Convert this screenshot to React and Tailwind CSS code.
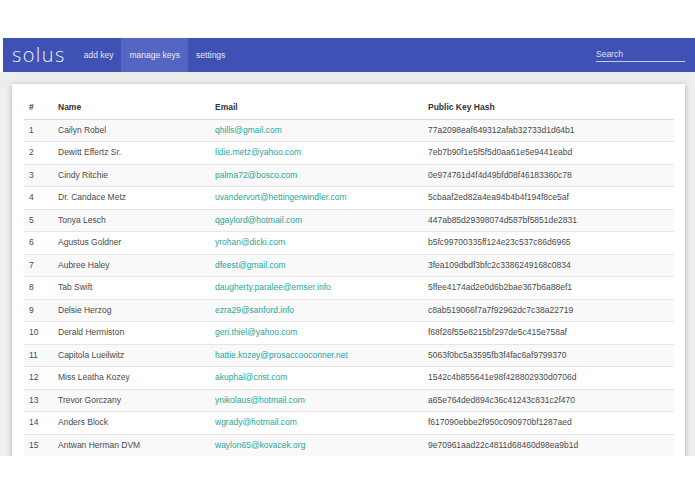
import React from 'react'

const rows = [
  ['1', 'Cailyn Robel', 'qhills@gmail.com', '77a2098eaf649312afab32733d1d64b1'],
  ['2', 'Dewitt Effertz Sr.', 'lidie.metz@yahoo.com', '7eb7b90f1e5f5f5d0aa61e5e9441eabd'],
  ['3', 'Cindy Ritchie', 'palma72@bosco.com', '0e974761d4f4d49bfd08f46183360c78'],
  ['4', 'Dr. Candace Metz', 'uvandervort@hettingerwindler.com', '5cbaaf2ed82a4ea94b4b4f194f8ce5af'],
  ['5', 'Tonya Lesch', 'qgaylord@hotmail.com', '447ab85d29398074d587bf5851de2831'],
  ['6', 'Agustus Goldner', 'yrohan@dicki.com', 'b5fc99700335ff124e23c537c86d6965'],
  ['7', 'Aubree Haley', 'dfeest@gmail.com', '3fea109dbdf3bfc2c3386249168c0834'],
  ['8', 'Tab Swift', 'daugherty.paralee@emser.info', '5ffee4174ad2e0d6b2bae367b6a88ef1'],
  ['9', 'Delsie Herzog', 'ezra29@sanford.info', 'c8ab519066f7a7f92962dc7c38a22719'],
  ['10', 'Derald Hermiston', 'geri.thiel@yahoo.com', 'f68f26f55e8215bf297de5c415e758af'],
  ['11', 'Capitola Lueilwitz', 'hattie.kozey@prosaccooconner.net', '5063f0bc5a3595fb3f4fac6af9799370'],
  ['12', 'Miss Leatha Kozey', 'akuphal@crist.com', '1542c4b855641e98f428802930d0706d'],
  ['13', 'Trevor Gorczany', 'ynikolaus@hotmail.com', 'a65e764ded894c36c41243c831c2f470'],
  ['14', 'Anders Block', 'wgrady@hotmail.com', 'f617090ebbe2f950c090970bf1287aed'],
  ['15', 'Antwan Herman DVM', 'waylon65@kovacek.org', '9e70961aad22c4811d68460d98ea9b1d'],
]

const Navbar = () => {
  return (
    <nav className="ml-[3px] h-[34px] bg-[#3f51b5] flex items-stretch text-white">
      <div className="pl-[9px] pr-[10px] flex items-center text-[20px] font-light tracking-[0.07em] text-white/90 font-['Open_Sans',sans-serif]">
        solus
      </div>
      <a className="px-[8px] flex items-center text-[8.5px] text-white/85">add key</a>
      <a className="px-[8px] flex items-center text-[8.5px] text-white/85 bg-[#5565c2]">manage keys</a>
      <a className="px-[8px] flex items-center text-[8.5px] text-white/85">settings</a>
      <div className="ml-auto mr-[10px] pt-[9px]">
        <div className="w-[89px] h-[15px] border-b border-white/70 flex items-end pb-[3px] text-[8.5px] leading-none text-white/80">
          Search
        </div>
      </div>
    </nav>
  )
}

const App = () => {
  return (
    <div className="w-[695px] h-[494px] bg-white font-['Liberation_Sans',Arial,sans-serif] overflow-hidden">
      <div className="h-[38px]"></div>
      <Navbar />

      <div className="h-[384px] bg-[#eeeeee] pl-[12px] pr-[10px] pt-[12px] overflow-hidden">
        <div className="bg-white shadow-[0_1px_6px_rgba(0,0,0,0.25)] pl-[12px] pr-[11px] pt-[12px] h-[400px]">
          <table className="w-full table-fixed border-collapse text-[8.5px] text-[#4a4a4a]">
            <colgroup>
              <col className="w-[29px]" />
              <col className="w-[157px]" />
              <col className="w-[213px]" />
              <col />
            </colgroup>
            <thead>
              <tr className="h-[23px] border-b border-[#dddddd]">
                <th className="pl-[5px] text-left font-bold text-[#333]">#</th>
                <th className="pl-[5px] text-left font-bold text-[#333]">Name</th>
                <th className="pl-[5px] text-left font-bold text-[#333]">Email</th>
                <th className="pl-[5px] text-left font-bold text-[#333]">Public Key Hash</th>
              </tr>
            </thead>
            <tbody>
              {rows.map((r, i) => (
                <tr key={r[0]} className={`h-[22.5px] border-t border-[#e4e4e4] ${i % 2 === 0 ? 'bg-[#f9f9f9]' : 'bg-white'}`}>
                  <td className="pl-[5px]">{r[0]}</td>
                  <td className="pl-[5px]">{r[1]}</td>
                  <td className="pl-[5px] text-[#26a69a]">{r[2]}</td>
                  <td className="pl-[5px]">{r[3]}</td>
                </tr>
              ))}
            </tbody>
          </table>
        </div>
      </div>
    </div>
  )
}

export default App
